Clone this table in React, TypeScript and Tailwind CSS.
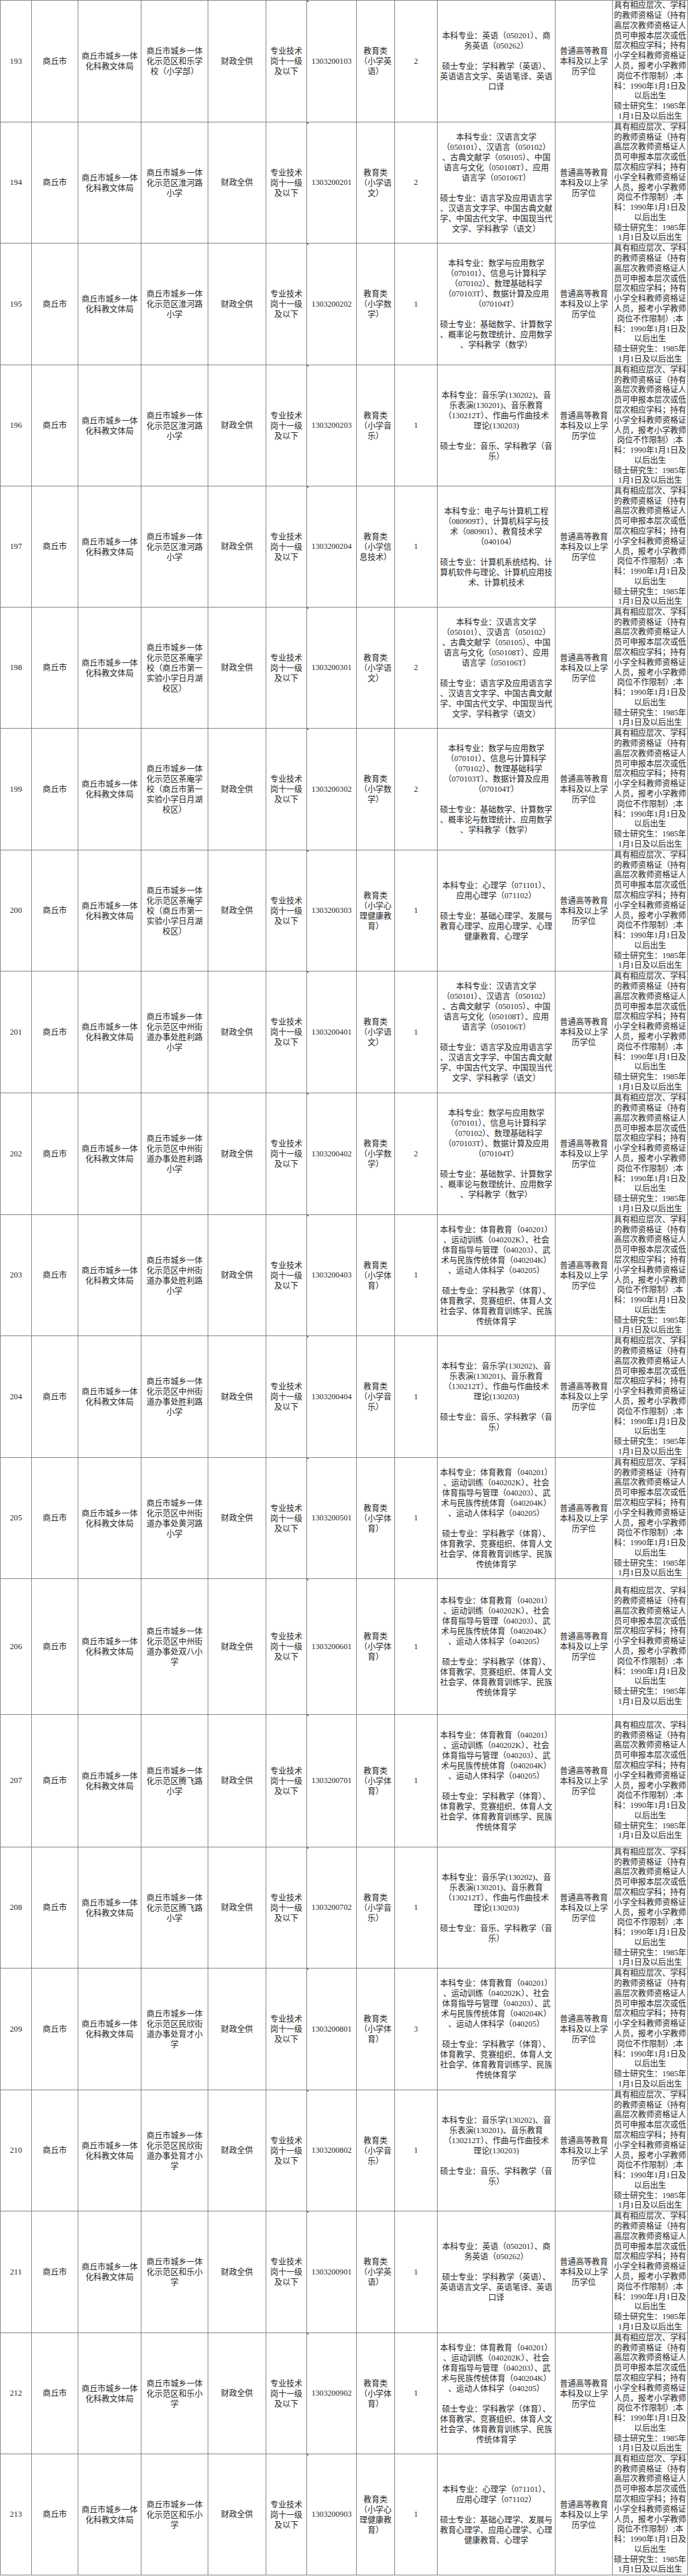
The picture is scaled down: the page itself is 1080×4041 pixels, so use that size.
import React from "react";

const DEPT = ["商丘市城乡一体", "化科教文体局"];
const LEVEL = ["专业技术", "岗十一级", "及以下"];
const EDU = ["普通高等教育", "本科及以上学", "历学位"];
const OTHER = [
  "具有相应层次、学科",
  "的教师资格证（持有",
  "高层次教师资格证人",
  "员可申报本层次或低",
  "层次相应学科；持有",
  "小学全科教师资格证",
  "人员，报考小学教师",
  "岗位不作限制）;本",
  "科：1990年1月1日及",
  "以后出生",
  "硕士研究生：1985年",
  "1月1日及以后出生",
];

const UNITS = {
  heleSchool: ["商丘市城乡一体", "化示范区和乐学", "校（小学部）"],
  huaihe: ["商丘市城乡一体", "化示范区淮河路", "小学"],
  chaan: ["商丘市城乡一体", "化示范区茶庵学", "校（商丘市第一", "实验小学日月湖", "校区）"],
  shengli: ["商丘市城乡一体", "化示范区中州街", "道办事处胜利路", "小学"],
  huanghe: ["商丘市城乡一体", "化示范区中州街", "道办事处黄河路", "小学"],
  shuangba: ["商丘市城乡一体", "化示范区中州街", "道办事处双八小", "学"],
  tengfei: ["商丘市城乡一体", "化示范区腾飞路", "小学"],
  yucai: ["商丘市城乡一体", "化示范区民欣街", "道办事处育才小", "学"],
  hele: ["商丘市城乡一体", "化示范区和乐小", "学"],
};

const NAMES = {
  en: ["教育类", "（小学英", "语）"],
  cn: ["教育类", "（小学语", "文）"],
  math: ["教育类", "（小学数", "学）"],
  music: ["教育类", "（小学音", "乐）"],
  it: ["教育类", "（小学信", "息技术）"],
  psy: ["教育类", "（小学心", "理健康教", "育）"],
  pe: ["教育类", "（小学体", "育）"],
};

const MAJORS = {
  en: [
    "本科专业：英语（050201）、商",
    "务英语（050262）",
    "",
    "硕士专业：学科教学（英语）、",
    "英语语言文学、英语笔译、英语",
    "口译",
  ],
  cn: [
    "本科专业：汉语言文学",
    "（050101）、汉语言（050102）",
    "、古典文献学（050105）、中国",
    "语言与文化（050108T）、应用",
    "语言学（050106T）",
    "",
    "硕士专业：语言学及应用语言学",
    "、汉语言文字学、中国古典文献",
    "学、中国古代文学、中国现当代",
    "文学、学科教学（语文）",
  ],
  math: [
    "本科专业：数学与应用数学",
    "（070101）、信息与计算科学",
    "（070102）、数理基础科学",
    "（070103T）、数据计算及应用",
    "（070104T）",
    "",
    "硕士专业：基础数学、计算数学",
    "、概率论与数理统计、应用数学",
    "、学科教学（数学）",
  ],
  music: [
    "本科专业：音乐学(130202)、音",
    "乐表演(130201)、音乐教育",
    "（130212T）、作曲与作曲技术",
    "理论(130203)",
    "",
    "硕士专业：音乐、学科教学（音",
    "乐）",
  ],
  it: [
    "本科专业：电子与计算机工程",
    "（080909T）、计算机科学与技",
    "术（080901）、教育技术学",
    "（040104）",
    "",
    "硕士专业：计算机系统结构、计",
    "算机软件与理论、计算机应用技",
    "术、计算机技术",
  ],
  psy: [
    "本科专业：心理学（071101）、",
    "应用心理学（071102）",
    "",
    "硕士专业：基础心理学、发展与",
    "教育心理学、应用心理学、心理",
    "健康教育、心理学",
  ],
  pe: [
    "本科专业：体育教育（040201）",
    "、运动训练（040202K）、社会",
    "体育指导与管理（040203）、武",
    "术与民族传统体育（040204K）",
    "、运动人体科学（040205）",
    "",
    "硕士专业：学科教学（体育）、",
    "体育教学、竞赛组织、体育人文",
    "社会学、体育教育训练学、民族",
    "传统体育学",
  ],
};

type Row = {
  no: number;
  unit: string[];
  code: string;
  name: string[];
  count: number;
  major: string[];
  h: string;
};

const ROWS: Row[] = [
  { no: 193, unit: UNITS.heleSchool, code: "1303200103", name: NAMES.en, count: 2, major: MAJORS.en, h: "h-[191px]" },
  { no: 194, unit: UNITS.huaihe, code: "1303200201", name: NAMES.cn, count: 2, major: MAJORS.cn, h: "h-[190px]" },
  { no: 195, unit: UNITS.huaihe, code: "1303200202", name: NAMES.math, count: 1, major: MAJORS.math, h: "h-[191px]" },
  { no: 196, unit: UNITS.huaihe, code: "1303200203", name: NAMES.music, count: 1, major: MAJORS.music, h: "h-[190px]" },
  { no: 197, unit: UNITS.huaihe, code: "1303200204", name: NAMES.it, count: 1, major: MAJORS.it, h: "h-[190px]" },
  { no: 198, unit: UNITS.chaan, code: "1303200301", name: NAMES.cn, count: 2, major: MAJORS.cn, h: "h-[190px]" },
  { no: 199, unit: UNITS.chaan, code: "1303200302", name: NAMES.math, count: 2, major: MAJORS.math, h: "h-[191px]" },
  { no: 200, unit: UNITS.chaan, code: "1303200303", name: NAMES.psy, count: 1, major: MAJORS.psy, h: "h-[190px]" },
  { no: 201, unit: UNITS.shengli, code: "1303200401", name: NAMES.cn, count: 1, major: MAJORS.cn, h: "h-[191px]" },
  { no: 202, unit: UNITS.shengli, code: "1303200402", name: NAMES.math, count: 2, major: MAJORS.math, h: "h-[191px]" },
  { no: 203, unit: UNITS.shengli, code: "1303200403", name: NAMES.pe, count: 1, major: MAJORS.pe, h: "h-[190px]" },
  { no: 204, unit: UNITS.shengli, code: "1303200404", name: NAMES.music, count: 1, major: MAJORS.music, h: "h-[191px]" },
  { no: 205, unit: UNITS.huanghe, code: "1303200501", name: NAMES.pe, count: 1, major: MAJORS.pe, h: "h-[190px]" },
  { no: 206, unit: UNITS.shuangba, code: "1303200601", name: NAMES.pe, count: 1, major: MAJORS.pe, h: "h-[213px]" },
  { no: 207, unit: UNITS.tengfei, code: "1303200701", name: NAMES.pe, count: 1, major: MAJORS.pe, h: "h-[208px]" },
  { no: 208, unit: UNITS.tengfei, code: "1303200702", name: NAMES.music, count: 1, major: MAJORS.music, h: "h-[190px]" },
  { no: 209, unit: UNITS.yucai, code: "1303200801", name: NAMES.pe, count: 3, major: MAJORS.pe, h: "h-[191px]" },
  { no: 210, unit: UNITS.yucai, code: "1303200802", name: NAMES.music, count: 1, major: MAJORS.music, h: "h-[190px]" },
  { no: 211, unit: UNITS.hele, code: "1303200901", name: NAMES.en, count: 1, major: MAJORS.en, h: "h-[191px]" },
  { no: 212, unit: UNITS.hele, code: "1303200902", name: NAMES.pe, count: 1, major: MAJORS.pe, h: "h-[190px]" },
  { no: 213, unit: UNITS.hele, code: "1303200903", name: NAMES.psy, count: 1, major: MAJORS.psy, h: "h-[190px]" },
];

function Lines({ lines, tight = false }: { lines: string[]; tight?: boolean }) {
  return (
    <div className={tight ? "leading-[15.8px]" : "leading-[16px]"}>
      {lines.map((l, i) => (
        <div key={i} className="whitespace-nowrap text-center">
          {l || "\u00a0"}
        </div>
      ))}
    </div>
  );
}

const cell = "flex items-center justify-center border-r border-[#808080] shrink-0";

export default function App() {
  return (
    <div className="w-[1080px] bg-white text-[#262626] text-[12.6px] font-['Liberation_Serif','Noto_Sans_CJK_SC',serif]">
      <div className="border-t border-l border-[#808080]">
        {ROWS.map((r) => (
          <div key={r.no} className={`flex border-b border-[#808080] ${r.h}`}>
            <div className={`${cell} w-[49px]`}>{r.no}</div>
            <div className={`${cell} w-[73px]`}>商丘市</div>
            <div className={`${cell} w-[99px]`}>
              <Lines lines={DEPT} />
            </div>
            <div className={`${cell} w-[105px]`}>
              <Lines lines={r.unit} />
            </div>
            <div className={`${cell} w-[91px]`}>财政全供</div>
            <div className={`${cell} w-[64px]`}>
              <Lines lines={LEVEL} />
            </div>
            <div className={`${cell} w-[78px] relative`}>
              <span className="absolute left-0 top-0 w-[2px] h-[2px] bg-[#2e8b2e]" />
              {r.code}
            </div>
            <div className={`${cell} w-[60px]`}>
              <Lines lines={r.name} />
            </div>
            <div className={`${cell} w-[67px]`}>{r.count}</div>
            <div className={`${cell} w-[185px]`}>
              <Lines lines={r.major} />
            </div>
            <div className={`${cell} w-[90px]`}>
              <Lines lines={EDU} />
            </div>
            <div className={`${cell} w-[118px]`}>
              <Lines lines={OTHER} tight />
            </div>
          </div>
        ))}
      </div>
    </div>
  );
}
